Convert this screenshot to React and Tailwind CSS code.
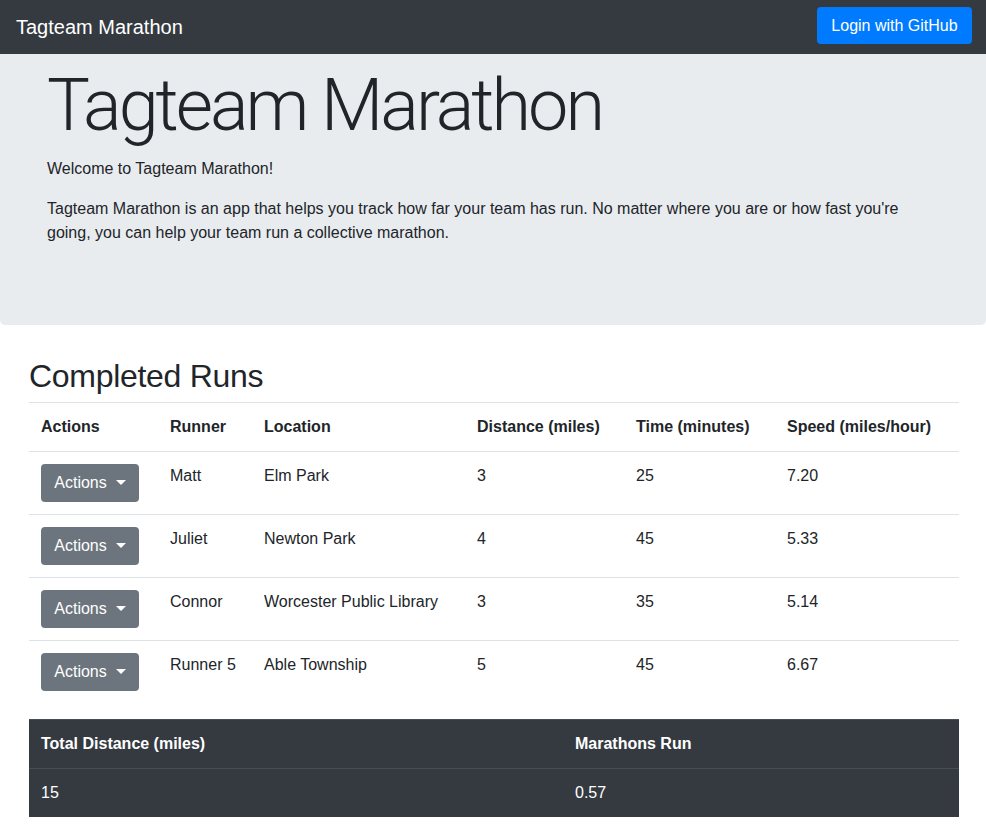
import React from 'react';

const runs = [
    { runner: 'Matt', location: 'Elm Park', distance: '3', time: '25', speed: '7.20' },
    { runner: 'Juliet', location: 'Newton Park', distance: '4', time: '45', speed: '5.33' },
    { runner: 'Connor', location: 'Worcester Public Library', distance: '3', time: '35', speed: '5.14' },
    { runner: 'Runner 5', location: 'Able Township', distance: '5', time: '45', speed: '6.67' },
];

const thClass = "text-left font-bold px-3 py-3 align-top border-t border-b border-[#dee2e6] leading-6";
const tdClass = "px-3 py-3 align-top border-t border-[#dee2e6] leading-6";
const darkCell = "text-left px-3 py-3 leading-6 border-t border-[#454d55]";

function ActionsButton() {
    return (
        <button className="h-[38px] w-[98px] px-3 rounded-[4px] bg-[#6c757d] text-white text-base leading-6 flex items-center justify-center">
            Actions
            <span className="inline-block ml-[9px] w-0 h-0 border-t-[5px] border-x-[5px] border-x-transparent border-t-white" />
        </button>
    );
}

export default function App() {
    return (
        <div className="min-h-screen bg-white text-[#212529] font-['Liberation_Sans',Arial,sans-serif]">
            <nav className="h-[54px] bg-[#343a40] flex items-start justify-between pl-4 pr-[14px] pt-[7px]">
                <span className="text-white text-xl leading-[40px]">Tagteam Marathon</span>
                <button className="h-[37px] w-[155px] rounded-[4px] bg-[#007bff] text-white text-base">Login with GitHub</button>
            </nav>

            <div className="bg-[#e9ecef] rounded-b-[5px] px-[47px] pt-[9px] pb-16 mb-8">
                <h1 className="text-[72px] leading-[1.2] font-light tracking-[-3px] mb-2 font-['Roboto',sans-serif]">Tagteam Marathon</h1>
                <p className="leading-6 mb-4">Welcome to Tagteam Marathon!</p>
                <p className="leading-6 mb-4">
                    Tagteam Marathon is an app that helps you track how far your team has run. No matter where you are or how fast you're going, you can help your team run a collective marathon.
                </p>
            </div>

            <div className="px-[29px] pb-[19px]">
                <h2 className="text-[32px] leading-[1.2] font-medium mb-[6px] tracking-[-0.3px]">Completed Runs</h2>
                <table className="w-[930px] table-fixed border-collapse mb-4">
                    <colgroup>
                        <col className="w-[129px]" />
                        <col className="w-[94px]" />
                        <col className="w-[213px]" />
                        <col className="w-[159px]" />
                        <col className="w-[151px]" />
                        <col className="w-[184px]" />
                    </colgroup>
                    <thead>
                        <tr>
                            <th className={thClass}>Actions</th>
                            <th className={thClass}>Runner</th>
                            <th className={thClass}>Location</th>
                            <th className={thClass}>Distance (miles)</th>
                            <th className={thClass}>Time (minutes)</th>
                            <th className={thClass}>Speed (miles/hour)</th>
                        </tr>
                    </thead>
                    <tbody>
                        {runs.map((run) => (
                            <tr key={run.runner}>
                                <td className={tdClass}><ActionsButton /></td>
                                <td className={tdClass}>{run.runner}</td>
                                <td className={tdClass}>{run.location}</td>
                                <td className={tdClass}>{run.distance}</td>
                                <td className={tdClass}>{run.time}</td>
                                <td className={tdClass}>{run.speed}</td>
                            </tr>
                        ))}
                    </tbody>
                </table>

                <table className="w-[930px] table-fixed border-collapse bg-[#343a40] text-white">
                    <colgroup>
                        <col className="w-[534px]" />
                        <col className="w-[396px]" />
                    </colgroup>
                    <thead>
                        <tr>
                            <th className={`${darkCell} font-bold border-b`}>Total Distance (miles)</th>
                            <th className={`${darkCell} font-bold border-b`}>Marathons Run</th>
                        </tr>
                    </thead>
                    <tbody>
                        <tr>
                            <td className={darkCell}>15</td>
                            <td className={darkCell}>0.57</td>
                        </tr>
                    </tbody>
                </table>
            </div>
        </div>
    );
}
